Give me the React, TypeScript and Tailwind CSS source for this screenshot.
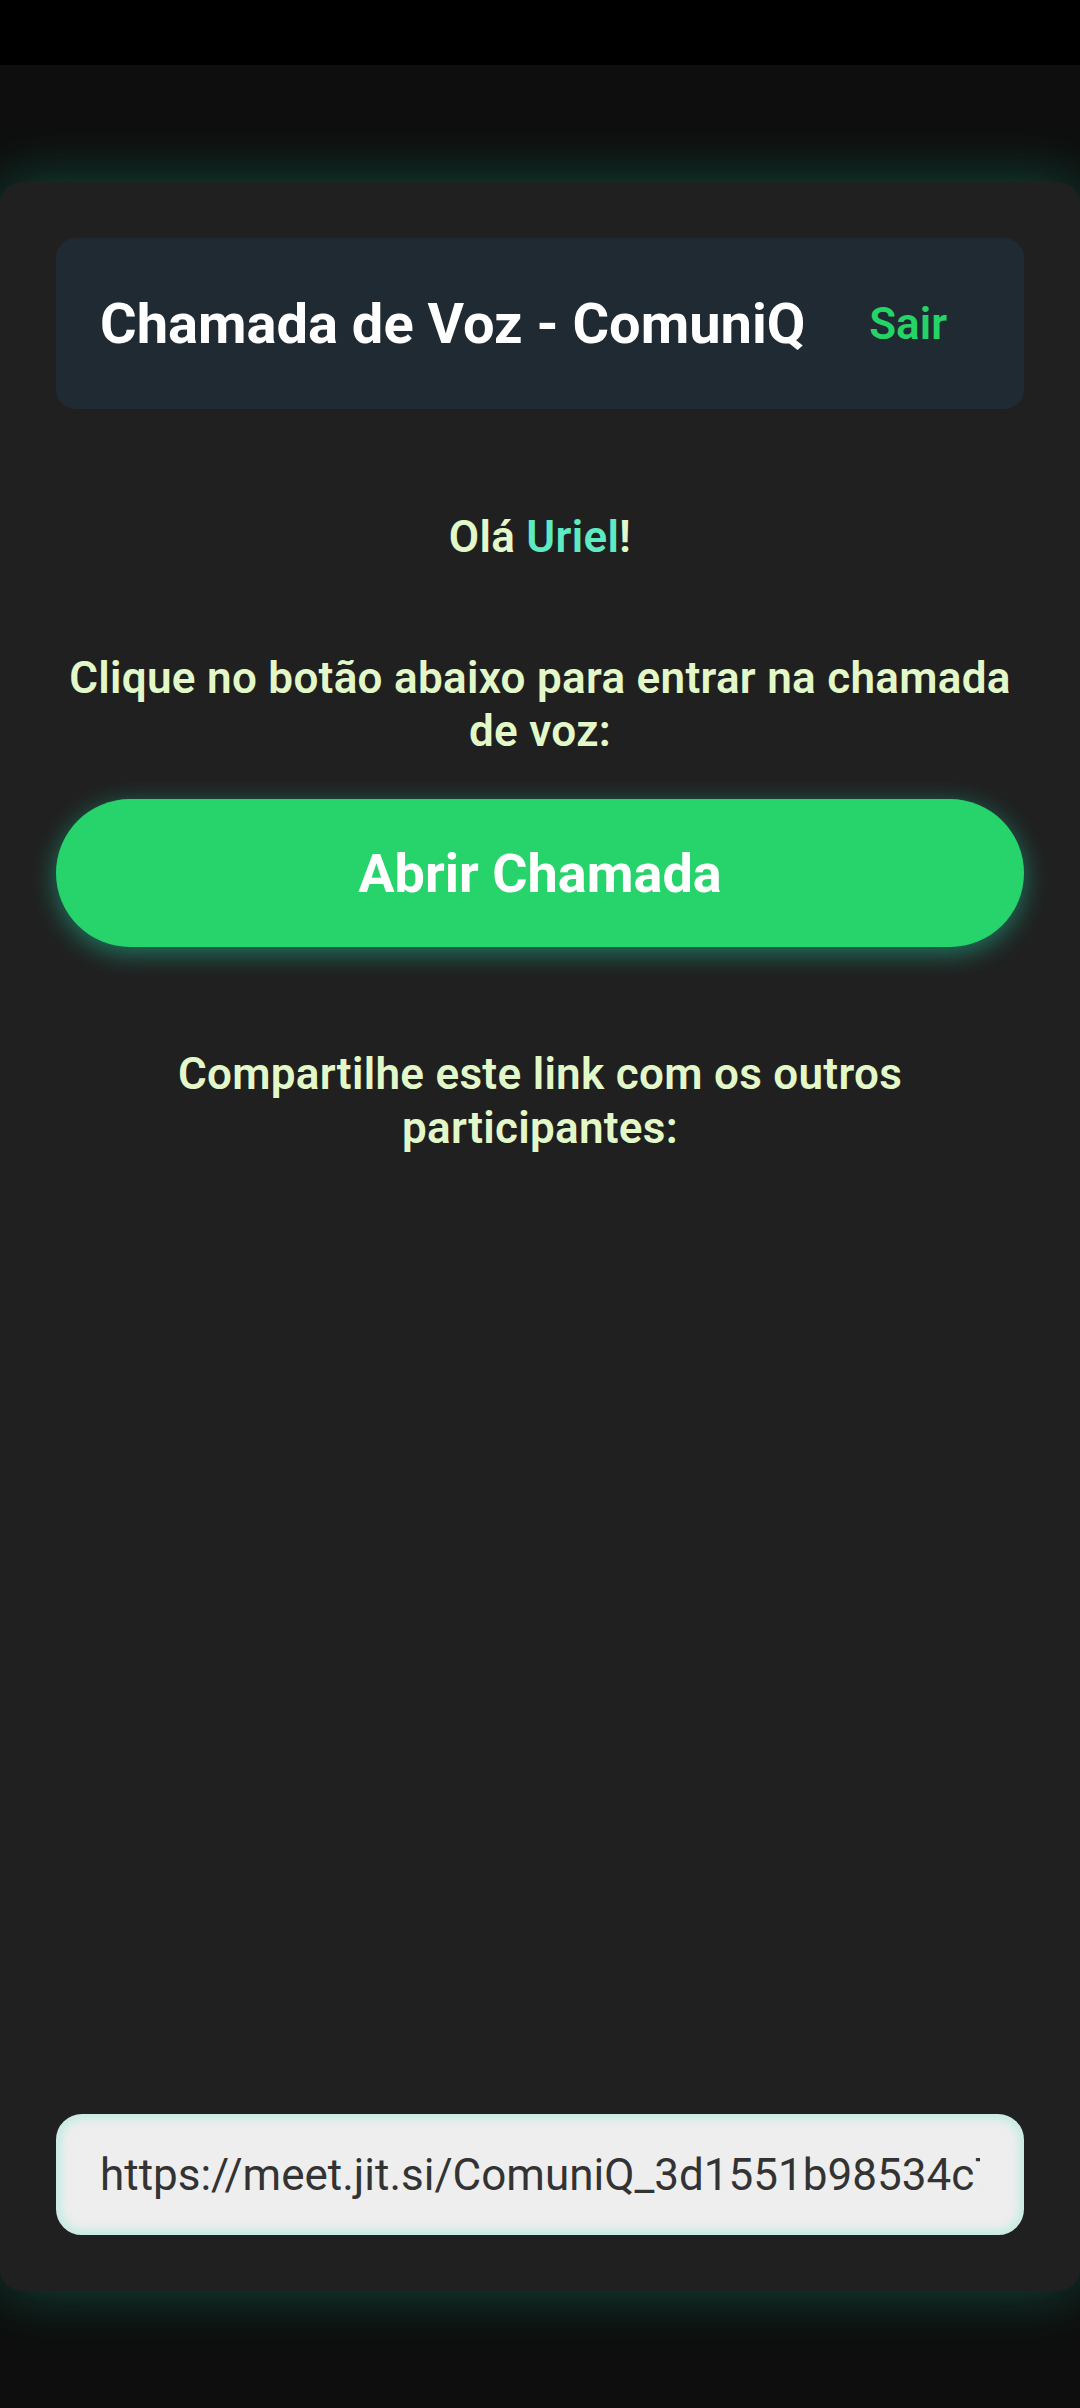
export default function App() {
  const roomUrl = "https://meet.jit.si/ComuniQ_3d1551b98534c7a2f1e0";

  return (
    <div className="min-h-screen flex flex-col bg-[#0e0e0e]" style={{ fontFamily: "Roboto, 'Noto Sans', sans-serif" }}>
      <div className="h-[65px] bg-black"></div>

      <main className="flex-1 py-[117px]">
        <div className="h-[2109px] w-full rounded-[22px] bg-[#202020] p-14 flex flex-col shadow-[0_0_60px_rgba(29,233,182,0.28)]">
          <header className="h-[171px] rounded-[20px] bg-[#1f2a32] pl-11 pr-[45px] flex items-center justify-between">
            <h1 className="text-[56px] font-bold text-white leading-none">Chamada de Voz - ComuniQ</h1>
            <button className="px-8 text-[44px] font-semibold text-[#25d366] leading-none">Sair</button>
          </header>

          <p className="mt-[102px] text-center text-[44px] leading-[53px] font-semibold tracking-[0.3px] text-[#e3f8c9]">
            Olá <span className="text-[#5eeac2]">Uriel</span>!
          </p>

          <p className="mt-[88px] text-center text-[44px] leading-[53px] font-semibold tracking-[0.3px] text-[#e3f8c9]">
            Clique no botão abaixo para entrar na chamada de voz:
          </p>

          <button className="mt-[41px] h-[148px] w-full rounded-full bg-[#27d36b] text-[54px] font-bold text-white shadow-[0_6px_26px_rgba(29,233,182,0.45)]">
            Abrir Chamada
          </button>

          <p className="mt-[100px] text-center text-[44px] leading-[54px] font-semibold tracking-[0.3px] text-[#e3f8c9]">
            Compartilhe este link com os outros participantes:
          </p>

          <div className="flex-1"></div>

          <input
            readOnly
            value={roomUrl}
            className="h-[121px] w-full rounded-[26px] border-2 border-[#cfe9e3] bg-[#eeeeee] px-[42px] text-[44px] text-[#333333] outline-none shadow-[inset_0_0_12px_rgba(29,233,182,0.35)]"
          />
        </div>
      </main>
    </div>
  );
}
